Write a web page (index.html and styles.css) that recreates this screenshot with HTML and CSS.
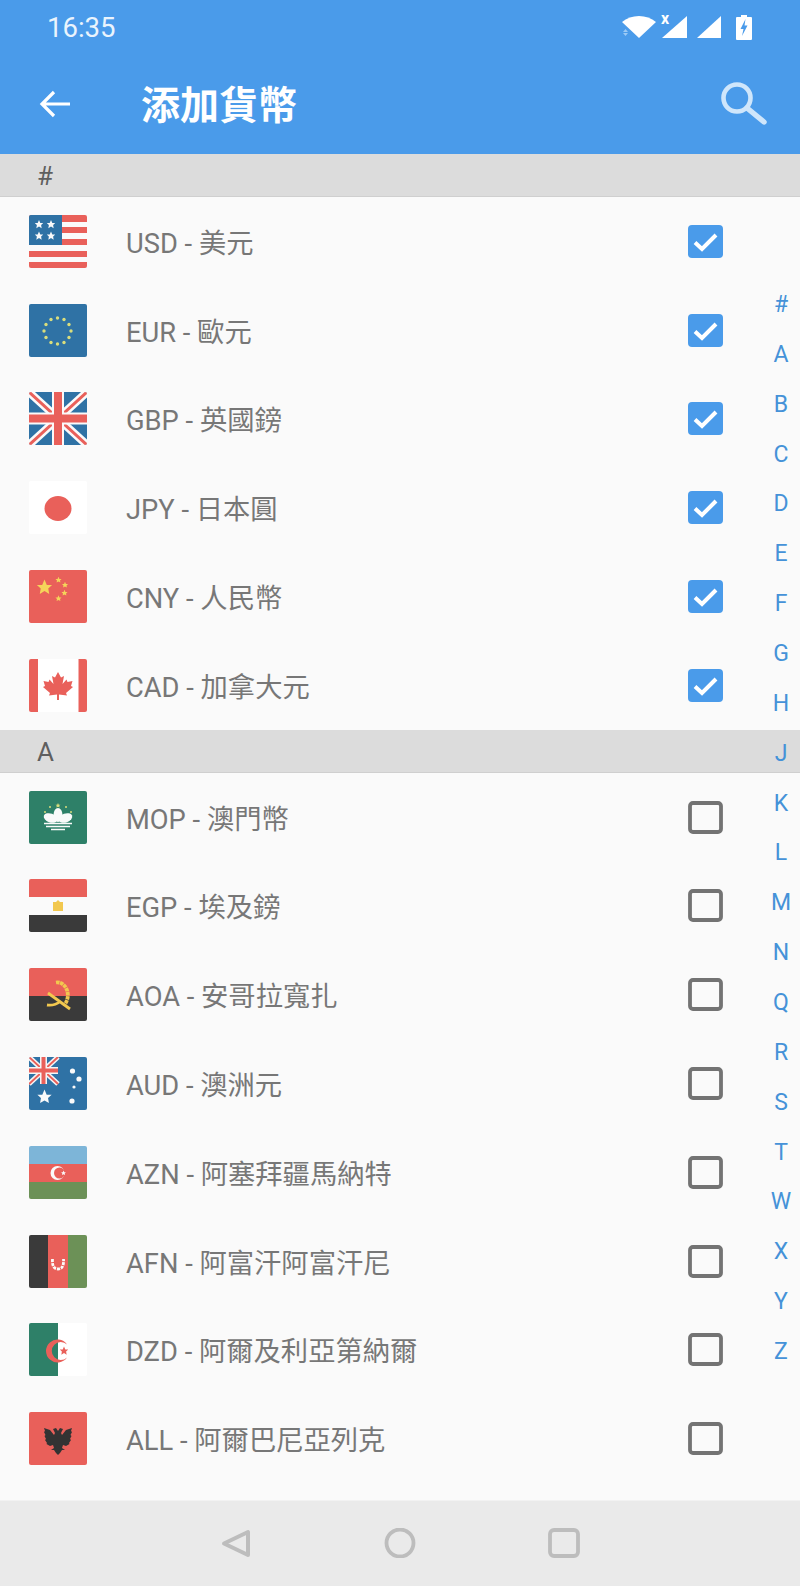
FILE: index.html
```html
<!DOCTYPE html>
<html lang="zh-Hant">
<head>
<meta charset="utf-8">
<title>添加貨幣</title>
<link rel="stylesheet" href="styles.css">
</head>
<body>
<svg class="defs" width="0" height="0" aria-hidden="true">
  <defs>
    <path id="st" d="M0-1 .29-.31 .95-.31 .47.12 .59.81 0 .45-.59.81-.47.12-.95-.31-.29-.31Z"/>
    <symbol id="check-on" viewBox="0 0 35 33">
      <rect x="0" y="0" width="35" height="33" rx="4" fill="#4a9bea"/>
      <path d="M7 17.500 14 24 28 10" fill="none" stroke="#fff" stroke-width="4"/>
    </symbol>
    <symbol id="check-off" viewBox="0 0 35 33">
      <rect x="2" y="2" width="31" height="29" rx="3" fill="none" stroke="#737373" stroke-width="3.800"/>
    </symbol>
  </defs>
</svg>
<div class="screen">
  <header class="appbar">
    <div class="status">
      <span class="time">16:35</span>
      <div class="status-icons">
        <svg class="ic-wifi" width="36" height="24" viewBox="0 0 36 24"><path d="M1 7C10-1 26-1 35 7L18 23Z" fill="#fff"/><path d="M2 17 4.500 14 7 17ZM2 18 4.500 21 7 18Z" fill="#9ccaf5"/></svg>
        <span class="cell-wrap">
          <svg width="27" height="24" viewBox="0 0 27 24"><path d="M26 1V23H1Z" fill="#fff"/></svg>
          <span class="x-mark">x</span>
        </span>
        <svg class="ic-cell2" width="26" height="24" viewBox="0 0 26 24"><path d="M25 1V23H1Z" fill="#fff"/></svg>
        <svg class="ic-batt" width="16" height="25" viewBox="0 0 16 25"><path d="M5 0H11V2H15A1 1 0 0 1 16 3V24A1 1 0 0 1 15 25H1A1 1 0 0 1 0 24V3A1 1 0 0 1 1 2H5Z" fill="#fff"/><path d="M9.500 4 4.500 14H7.500L6 21 11.500 10.500H8.500Z" fill="#4a9bea"/></svg>
      </div>
    </div>
    <div class="toolbar">
      <svg class="ic-back" width="32" height="28" viewBox="0 0 32 28"><path d="M31 14H3M15 2 3 14 15 26" fill="none" stroke="#fff" stroke-width="3.200"/></svg>
      <h1 class="title">添加貨幣</h1>
      <svg class="ic-search" width="48" height="48" viewBox="0 0 48 48"><circle cx="18" cy="18" r="13.500" fill="none" stroke="#cfe6fb" stroke-width="4.600"/><path d="M28 28 45 42" fill="none" stroke="#cfe6fb" stroke-width="5.400" stroke-linecap="round"/></svg>
    </div>
  </header>

  <main class="list">
    <div class="section">#</div>

    <div class="row">
      <svg class="flag" viewBox="0 0 58 53"><rect width="58" height="53" fill="#fafafa"/><path d="M0 0H58V7H0ZM0 12H58V18H0ZM0 24H58V30H0ZM0 36H58V42H0ZM0 47H58V53H0Z" fill="#e9605a"/><rect width="33" height="30" fill="#2f72a5"/><g fill="#fafafa"><use href="#st" transform="translate(10 9.500) scale(4.500)"/><use href="#st" transform="translate(22 9.500) scale(4.500)"/><use href="#st" transform="translate(10 21) scale(4.500)"/><use href="#st" transform="translate(22 21) scale(4.500)"/></g></svg>
      <span class="name">USD - 美元</span>
      <svg class="check"><use href="#check-on"/></svg>
    </div>
    <div class="row">
      <svg class="flag" viewBox="0 0 58 53"><rect width="58" height="53" fill="#2f72a5"/><g fill="#d9dd7c"><circle cx="28.500" cy="14" r="1.700"/><circle cx="35" cy="15.500" r="1.700"/><circle cx="40" cy="20.500" r="1.700"/><circle cx="42" cy="27" r="1.700"/><circle cx="40" cy="33.500" r="1.700"/><circle cx="35" cy="38.500" r="1.700"/><circle cx="28.500" cy="40" r="1.700"/><circle cx="22" cy="38.500" r="1.700"/><circle cx="17" cy="33.500" r="1.700"/><circle cx="15" cy="27" r="1.700"/><circle cx="17" cy="20.500" r="1.700"/><circle cx="22" cy="15.500" r="1.700"/></g></svg>
      <span class="name">EUR - 歐元</span>
      <svg class="check"><use href="#check-on"/></svg>
    </div>
    <div class="row">
      <svg class="flag" viewBox="0 0 58 53"><rect width="58" height="53" fill="#2f72a5"/><path d="M0 0 58 53M58 0 0 53" stroke="#fafafa" stroke-width="8"/><path d="M0 0 58 53M58 0 0 53" stroke="#e9605a" stroke-width="3"/><path d="M29 0V53M0 26.500H58" stroke="#fafafa" stroke-width="12"/><path d="M29 0V53M0 26.500H58" stroke="#e9605a" stroke-width="8"/></svg>
      <span class="name">GBP - 英國鎊</span>
      <svg class="check"><use href="#check-on"/></svg>
    </div>
    <div class="row">
      <svg class="flag" viewBox="0 0 58 53"><rect width="58" height="53" fill="#fff"/><ellipse cx="29" cy="27.500" rx="13.500" ry="12.500" fill="#e9605a"/></svg>
      <span class="name">JPY - 日本圓</span>
      <svg class="check"><use href="#check-on"/></svg>
    </div>
    <div class="row">
      <svg class="flag" viewBox="0 0 58 53"><rect width="58" height="53" fill="#e9605a"/><g fill="#f5d45a"><use href="#st" transform="translate(15.500 17.500) scale(8)"/><use href="#st" transform="translate(29.500 10) scale(3.200)"/><use href="#st" transform="translate(36 15) scale(3.200)"/><use href="#st" transform="translate(35.500 23) scale(3.200)"/><use href="#st" transform="translate(29.500 28.500) scale(3.200)"/></g></svg>
      <span class="name">CNY - 人民幣</span>
      <svg class="check"><use href="#check-on"/></svg>
    </div>
    <div class="row">
      <svg class="flag" viewBox="0 0 58 53"><rect width="58" height="53" fill="#fff"/><path d="M0 0H9V53H0ZM49.500 0H58V53H49.500Z" fill="#e9605a"/><path d="M29 13 32 18.500 35 17 33.500 25 37.500 20.500 38.500 23 43.500 22 42 27 44 28 37 34 38 36.500 30 35.500V41H28V35.500L20 36.500 21 34 14 28 16 27 14.500 22 19.500 23 20.500 20.500 24.500 25 23 17 26 18.500Z" fill="#e9605a"/></svg>
      <span class="name">CAD - 加拿大元</span>
      <svg class="check"><use href="#check-on"/></svg>
    </div>

    <div class="section">A</div>

    <div class="row">
      <svg class="flag" viewBox="0 0 58 53"><rect width="58" height="53" fill="#2e8068"/><use href="#st" transform="translate(29 14.500) scale(2.600)" fill="#d9dd7c"/><g fill="#d9dd7c"><circle cx="21" cy="16" r="1"/><circle cx="37" cy="16" r="1"/><circle cx="16" cy="21" r="1"/><circle cx="42" cy="21" r="1"/></g><g fill="#fafafa"><ellipse cx="29" cy="24" rx="4.500" ry="7"/><ellipse cx="21.500" cy="27" rx="7" ry="4.500" transform="rotate(20 21.500 27)"/><ellipse cx="36.500" cy="27" rx="7" ry="4.500" transform="rotate(-20 36.500 27)"/></g><path d="M15 32.500H43M17 35.500H41M22 38.500H36" stroke="#fafafa" stroke-width="1.500"/></svg>
      <span class="name">MOP - 澳門幣</span>
      <svg class="check"><use href="#check-off"/></svg>
    </div>
    <div class="row">
      <svg class="flag" viewBox="0 0 58 53"><rect width="58" height="53" fill="#fafafa"/><rect width="58" height="18" fill="#e9605a"/><rect y="36" width="58" height="17" fill="#3a3a3a"/><path d="M25 23H27L29 21 31 23H34V32H24V23Z" fill="#f2c84f"/></svg>
      <span class="name">EGP - 埃及鎊</span>
      <svg class="check"><use href="#check-off"/></svg>
    </div>
    <div class="row">
      <svg class="flag" viewBox="0 0 58 53"><rect width="58" height="28" fill="#e9605a"/><rect y="28" width="58" height="25" fill="#3a3a3a"/><path d="M27 14.500C36 13 43 26 36 36" fill="none" stroke="#f2c84f" stroke-width="3.800" stroke-dasharray="3.500 .6"/><path d="M19 25 41 41M18 37C24 38 28 36 32 33" fill="none" stroke="#f2c84f" stroke-width="2.800"/></svg>
      <span class="name">AOA - 安哥拉寬扎</span>
      <svg class="check"><use href="#check-off"/></svg>
    </div>
    <div class="row">
      <svg class="flag" viewBox="0 0 58 53"><rect width="58" height="53" fill="#2f72a5"/><path d="M0 0 29 27M29 0 0 27" stroke="#f5f5f5" stroke-width="5"/><path d="M0 0 29 27M29 0 0 27" stroke="#e9605a" stroke-width="2"/><path d="M14.500 0V27M0 13.500H29" stroke="#f5f5f5" stroke-width="7"/><path d="M14.500 0V27M0 13.500H29" stroke="#e9605a" stroke-width="4"/><g fill="#fafafa"><use href="#st" transform="translate(15.500 40) scale(7.500)"/><circle cx="43.500" cy="14" r="2.600"/><circle cx="50" cy="22" r="2.600"/><circle cx="45" cy="30" r="1.600"/><circle cx="43" cy="44" r="2.600"/></g></svg>
      <span class="name">AUD - 澳洲元</span>
      <svg class="check"><use href="#check-off"/></svg>
    </div>
    <div class="row">
      <svg class="flag" viewBox="0 0 58 53"><rect width="58" height="18" fill="#7db5d8"/><rect y="18" width="58" height="18" fill="#e9605a"/><rect y="36" width="58" height="17" fill="#6c9157"/><circle cx="28.500" cy="27" r="7" fill="#fafafa"/><circle cx="30.500" cy="27" r="5.500" fill="#e9605a"/><use href="#st" transform="translate(34.500 27) scale(2.600)" fill="#fafafa"/></svg>
      <span class="name">AZN - 阿塞拜疆馬納特</span>
      <svg class="check"><use href="#check-off"/></svg>
    </div>
    <div class="row">
      <svg class="flag" viewBox="0 0 58 53"><rect width="19" height="53" fill="#3a3a3a"/><rect x="19" width="20" height="53" fill="#e9605a"/><rect x="39" width="19" height="53" fill="#6c9157"/><path d="M23.500 24C23 31 25 34 29 34 33 34 35 31 34.500 24" fill="none" stroke="#fafafa" stroke-width="2.800" stroke-dasharray="3 1"/></svg>
      <span class="name">AFN - 阿富汗阿富汗尼</span>
      <svg class="check"><use href="#check-off"/></svg>
    </div>
    <div class="row">
      <svg class="flag" viewBox="0 0 58 53"><rect width="29" height="53" fill="#2e8068"/><rect x="29" width="29" height="53" fill="#fff"/><path d="M38 21.500A11.500 11.500 0 1 0 38 34.500 9 9 0 1 1 38 21.500Z" fill="#e9605a"/><use href="#st" transform="translate(35 28) scale(4.500)" fill="#e9605a"/></svg>
      <span class="name">DZD - 阿爾及利亞第納爾</span>
      <svg class="check"><use href="#check-off"/></svg>
    </div>
    <div class="row">
      <svg class="flag" viewBox="0 0 58 53"><rect width="58" height="53" fill="#e9605a"/><path d="M29 19 27 16 24 17 26 21 25 23 21 18 15 16 16 19 15 20 16.500 23 15.500 24 17 27 16 28 18 31 17.500 32 21 34 24 33 25 36 22 38 25 38 27 41 29 43 31 41 33 38 36 38 33 36 34 33 37 34 40.500 32 40 31 42 28 41 27 42.500 24 41.500 23 43 20 42 19 43 16 37 18 33 23 32 21 34 17 31 16Z" fill="#333"/></svg>
      <span class="name">ALL - 阿爾巴尼亞列克</span>
      <svg class="check"><use href="#check-off"/></svg>
    </div>
  </main>

  <nav class="index">
    <span>#</span><span>A</span><span>B</span><span>C</span><span>D</span><span>E</span><span>F</span><span>G</span><span>H</span><span>J</span><span>K</span><span>L</span><span>M</span><span>N</span><span>Q</span><span>R</span><span>S</span><span>T</span><span>W</span><span>X</span><span>Y</span><span>Z</span>
  </nav>

  <footer class="navbar">
    <svg width="30" height="29" viewBox="0 0 30 29"><path d="M27 3V26L3 14.500Z" fill="none" stroke="#bdbdbd" stroke-width="4" stroke-linejoin="round"/></svg>
    <svg width="32" height="30" viewBox="0 0 32 30"><circle cx="16" cy="15" r="13.500" fill="none" stroke="#bdbdbd" stroke-width="3.800"/></svg>
    <svg width="32" height="30" viewBox="0 0 32 30"><rect x="2" y="2" width="28" height="26" rx="4" fill="none" stroke="#bdbdbd" stroke-width="3.800"/></svg>
  </footer>
</div>
</body>
</html>
```

FILE: styles.css
```css
* { box-sizing: border-box; }

html, body {
  margin: 0;
  padding: 0;
}

body {
  font-family: Roboto, "Noto Sans CJK TC", sans-serif;
  background: #fafafa;
}

.defs {
  position: absolute;
}

.screen {
  position: relative;
  width: 800px;
  height: 1586px;
  display: flex;
  flex-direction: column;
  overflow: hidden;
}

.appbar {
  height: 154px;
  flex: none;
  background: #4a9bea;
  color: #fff;
}

.status {
  height: 54px;
  padding: 0 48px 0 47px;
  display: flex;
  align-items: center;
  justify-content: space-between;
}

.time {
  font-size: 27.5px;
  color: #eaf4fd;
}

.status-icons {
  display: flex;
  align-items: center;
  gap: 8px;
}

.cell-wrap {
  position: relative;
  display: flex;
  margin-left: -4px;
}

.x-mark {
  position: absolute;
  top: -4px;
  left: 0;
  font-size: 16px;
  font-weight: 700;
  line-height: 16px;
  color: #fff;
}

.ic-batt { margin-left: 6px; }

.toolbar {
  height: 100px;
  padding: 0 33px 0 39px;
  display: flex;
  align-items: center;
}

.ic-back { flex: none; }

.title {
  margin: -4px 0 0 70px;
  flex: 1;
  font-size: 39px;
  font-weight: 700;
  line-height: 1;
  font-family: "Noto Sans CJK TC", sans-serif;
}

.ic-search { flex: none; }

.list {
  flex: 1;
  min-height: 0;
}

.section {
  height: 43px;
  padding: 2px 0 0 37px;
  display: flex;
  align-items: center;
  background: #dcdcdc;
  border-bottom: 1px solid #cfcfcf;
  color: #5f5f5f;
  font-size: 26px;
}

.row {
  height: 88.8px;
  padding: 0 77px 0 29px;
  display: flex;
  align-items: center;
}

.flag {
  width: 58px;
  height: 53px;
  flex: none;
  border-radius: 2px;
}

.name {
  margin: -1px 0 0 39px;
  flex: 1;
  font-size: 27.3px;
  color: #777;
  white-space: nowrap;
}

.check {
  width: 35px;
  height: 33px;
  flex: none;
}

.index {
  position: absolute;
  top: 280px;
  right: 0;
  width: 38px;
  display: flex;
  flex-direction: column;
  align-items: center;
  color: #4592d8;
  font-size: 23px;
}

.index span {
  height: 49.86px;
  line-height: 49.86px;
}

.navbar {
  height: 86px;
  flex: none;
  padding: 0 220px 0 221px;
  display: flex;
  align-items: center;
  justify-content: space-between;
  background: #eaeaea;
  border-top: 1px solid #f2f2f2;
}

.navbar svg {
  margin-top: -1px;
}
```
